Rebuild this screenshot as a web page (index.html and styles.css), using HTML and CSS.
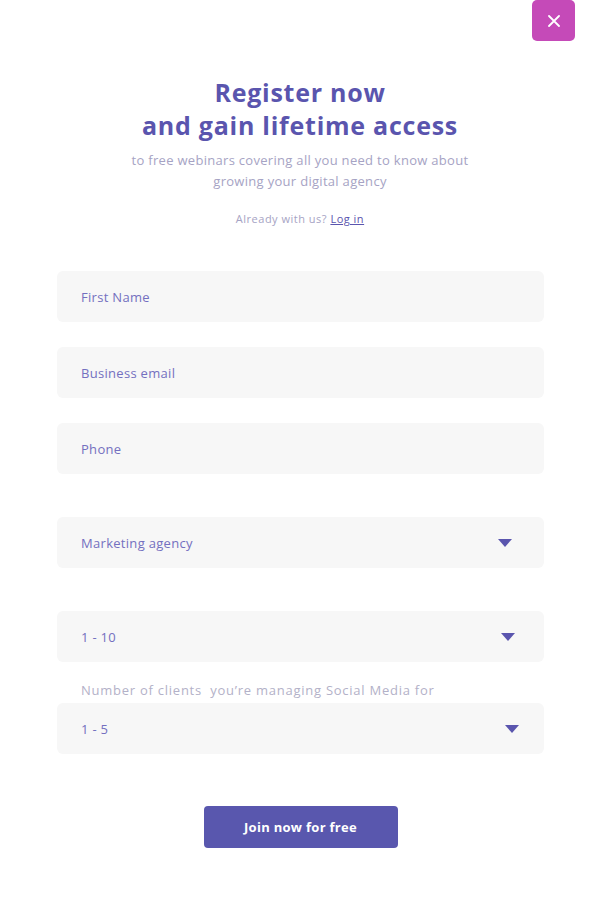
FILE: index.html
```html
<!DOCTYPE html>
<html lang="en">
<head>
<meta charset="utf-8">
<title>Register</title>
<link rel="stylesheet" href="styles.css">
</head>
<body>
<div class="modal">
  <button class="close" aria-label="Close">
    <svg width="12" height="12" viewBox="0 0 12 12"><path d="M1 1L11 11M11 1L1 11" stroke="#fff" stroke-width="1.8" stroke-linecap="round"/></svg>
  </button>
  <header class="head">
    <h1 class="title">Register now<br>and gain lifetime access</h1>
    <p class="sub">to free webinars covering all you need to know about<br>growing your digital agency</p>
    <p class="already">Already with us? <a href="#" class="login">Log in</a></p>
  </header>
  <form class="form">
    <div class="field">First Name</div>
    <div class="field gap-s">Business email</div>
    <div class="field gap-s">Phone</div>
    <div class="field select gap-l">Marketing agency<span class="arrow a1"></span></div>
    <div class="field select gap-l">1 - 10<span class="arrow a2"></span></div>
    <div class="label">Number of clients&nbsp; you’re managing Social Media for</div>
    <div class="field select">1 - 5<span class="arrow a3"></span></div>
    <div class="actions"><button type="button" class="join">Join now for free</button></div>
  </form>
</div>
</body>
</html>
```
FILE: styles.css
```css
* { box-sizing: border-box; }
html, body { margin: 0; padding: 0; background: #fff; }
body { font-family: "Open Sans", "Liberation Sans", sans-serif; }
.modal { position: relative; width: 600px; height: 904px; background: #fff; }
.close {
  position: absolute; top: 0; right: 25px;
  width: 43px; height: 41px; border: 0; border-radius: 5px;
  background: #c54ab8; display: flex; align-items: center; justify-content: center; padding: 0;
}
.head { text-align: center; padding-top: 76px; }
.title {
  margin: 0; font-size: 25px; line-height: 33px; font-weight: 700; color: #5a55ae; letter-spacing: 0.75px;
}
.sub { margin: 8px 0 0; font-size: 13px; line-height: 21px; color: #a6a3c4; letter-spacing: 0.3px; }
.already { margin: 19px 0 0; font-size: 11px; line-height: 16px; color: #a6a3c4; letter-spacing: 0.5px; }
.login { color: #5a55ae; text-decoration: underline; }
.form { margin: 44px 56px 0 57px; display: flex; flex-direction: column; }
.field {
  position: relative; height: 51px; border-radius: 6px; background: #f7f7f7;
  padding-left: 24px; display: flex; align-items: center;
  font-size: 13px; color: #7470c0; letter-spacing: 0.3px;
}
.gap-s { margin-top: 25px; }
.gap-l { margin-top: 43px; }
.arrow {
  position: absolute; top: 50%; margin-top: -4px; width: 0; height: 0;
  border-left: 7px solid transparent; border-right: 7px solid transparent; border-top: 8px solid #5a55ae;
}
.a1 { right: 32px; }
.a2 { right: 29px; }
.a3 { right: 25px; }
.label { margin-top: 19px; margin-bottom: 3px; height: 19px; padding-left: 24px; font-size: 13px; line-height: 19px; color: #b3b1c8; letter-spacing: 0.75px; }
.actions { display: flex; justify-content: center; margin-top: 52px; }
.join {
  width: 194px; height: 42px; border: 0; border-radius: 4px; background: #5957ae; color: #fff;
  font-family: inherit; font-size: 13px; font-weight: 700; letter-spacing: 0.3px; padding: 0;
}
```
